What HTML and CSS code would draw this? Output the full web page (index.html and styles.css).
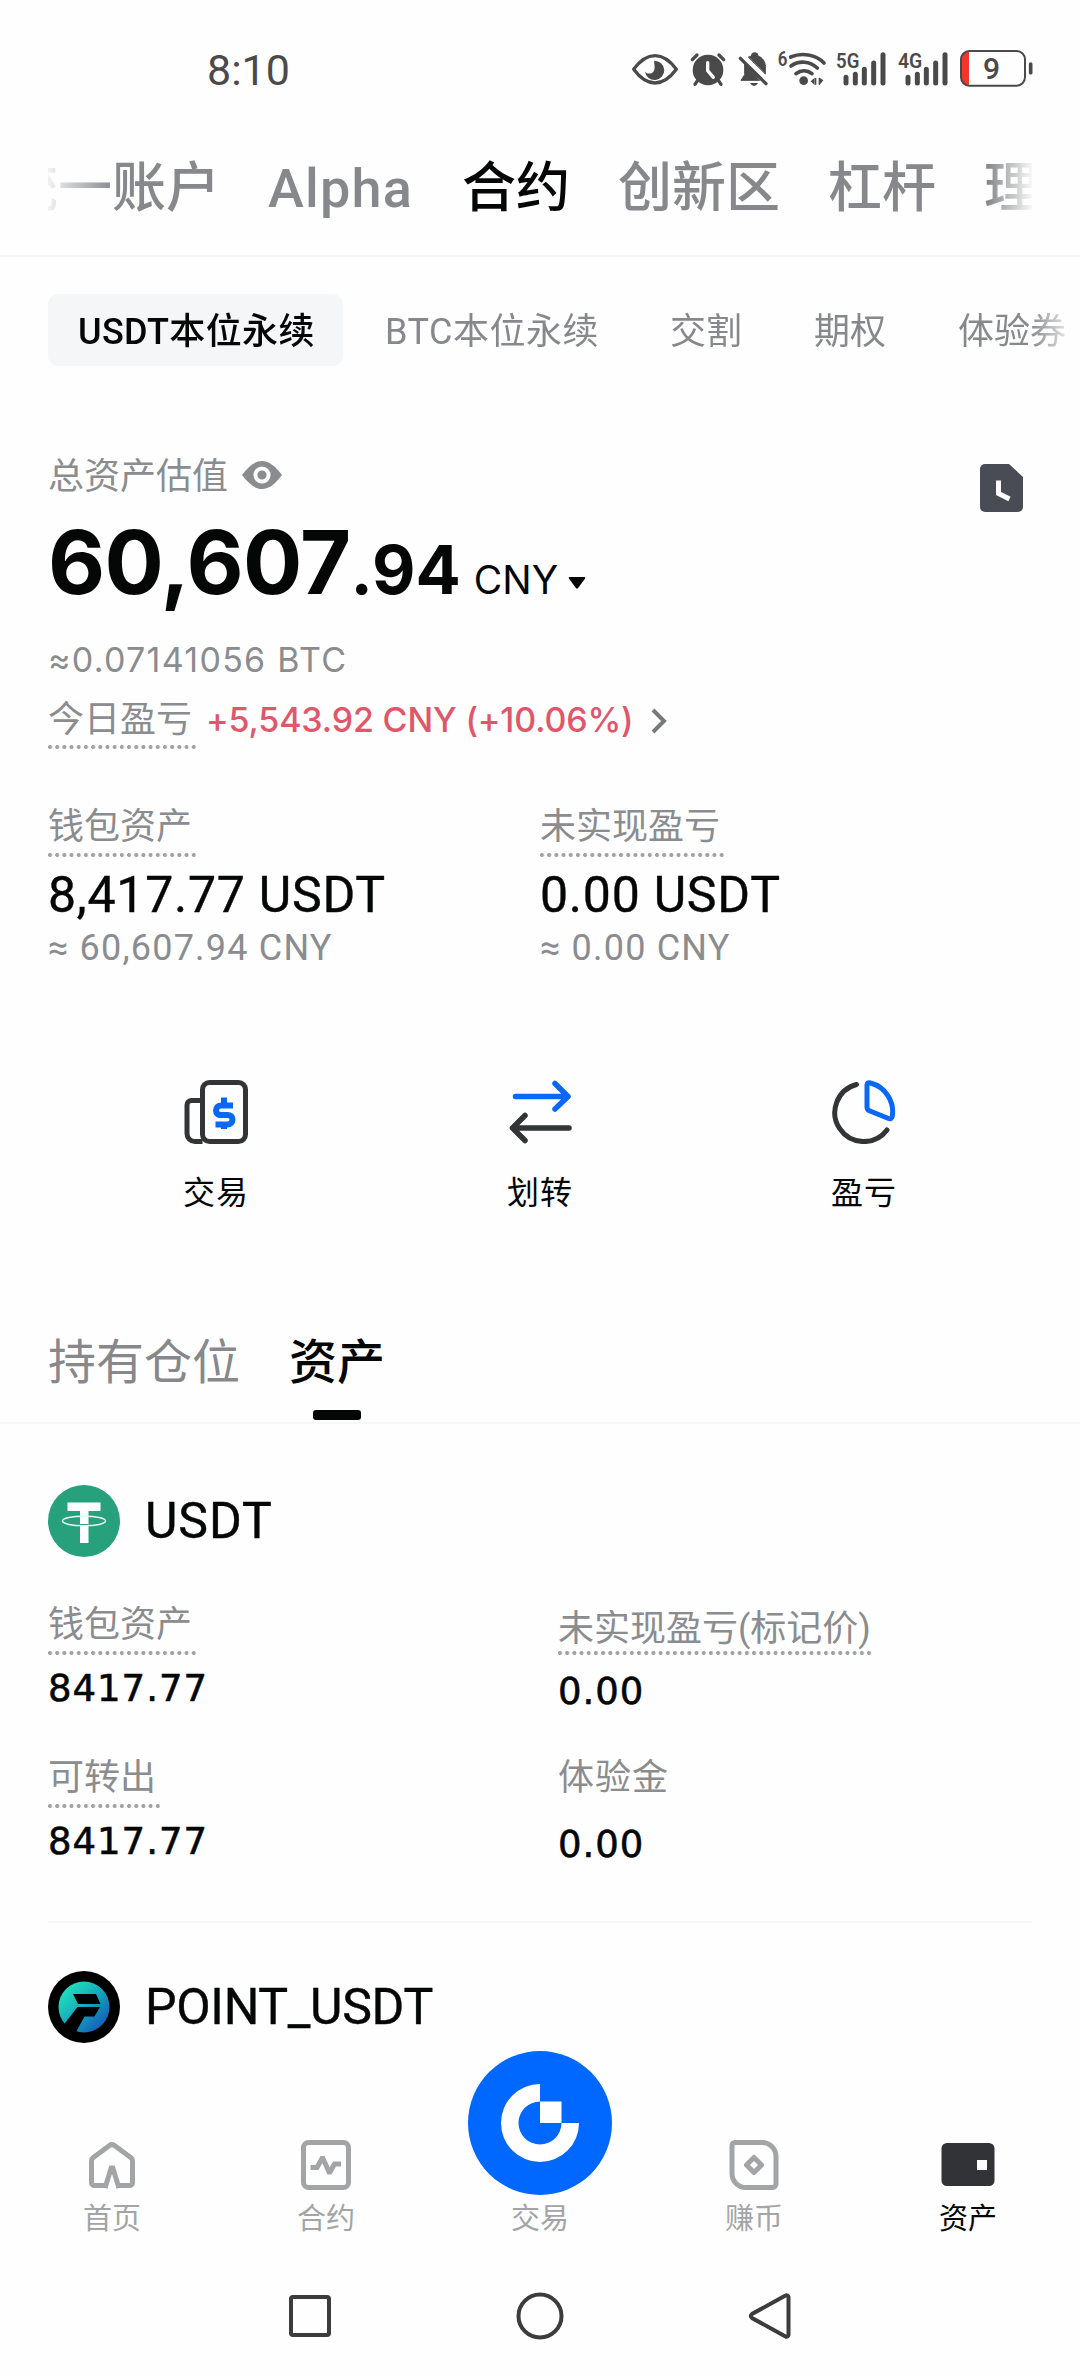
FILE: index.html
```html
<!DOCTYPE html>
<html lang="zh-CN">
<head>
<meta charset="utf-8">
<title>资产</title>
<link rel="stylesheet" href="styles.css">
</head>
<body>
<div class="screen">
  <header class="status">
    <span class="clock">8:10</span>
    <svg class="status-icons" viewBox="0 0 1260 180" fill="none" stroke="#4a4a4a" stroke-linecap="round">
      <path d="M41 88C60 62 82 47 105 47s45 15 64 41c-19 26-41 41-64 41S60 114 41 88Z" stroke-width="10" stroke-linejoin="round"/>
      <path d="M103 62a29 29 0 1 1-28 33c8 9 22 7 27-3 5-11-1-19 1-30Z" fill="#4a4a4a" stroke="none"/>
      <circle cx="264" cy="90" r="46" fill="#4a4a4a" stroke="none"/>
      <path d="M217 59l14-14M311 59l-14-14M233 121l-8 12M295 121l8 12" stroke-width="10"/>
      <path d="M263 68v24l17 20" stroke="#fefefe" stroke-width="10"/>
      <path d="M374 70v34l-11 17h55zM386 51l8-3a10 10 0 0 1 20 0c14 5 22 17 22 31v22z" fill="#4a4a4a" stroke="#4a4a4a" stroke-width="3" stroke-linejoin="round"/>
      <path d="M361 55l77 76" stroke-width="10"/>
      <path d="M390 129h24q-4 9-12 9t-12-9z" fill="#4a4a4a" stroke="none"/>
      <text x="473" y="79" class="tiny" textLength="29" lengthAdjust="spacingAndGlyphs">6</text>
      <path d="M512 51c33-14 75-8 100 18M513 78c24-17 56-15 79 6M528 101c15-12 34-11 48 0" stroke-width="11"/>
      <circle cx="551" cy="122" r="13" fill="#4a4a4a" stroke="none"/>
      <path d="M584 113v22l-12-11zM599 113l11 8-11 13z" fill="#4a4a4a" stroke="none"/>
      <path d="M587 115v18M598 115v18" stroke-width="4"/>
      <text x="648" y="83" class="tiny" textLength="70" lengthAdjust="spacingAndGlyphs">5G</text>
      <path d="M678 112v17M706 103v26M733 88v41M761 69v60M789 44v85" stroke-width="15"/>
      <text x="834" y="83" class="tiny" textLength="73" lengthAdjust="spacingAndGlyphs">4G</text>
      <path d="M864 112v17M892 103v26M919 88v41M947 69v60M975 44v85" stroke-width="15"/>
      <path d="M1047 36v98c-16 0-23-8-23-22V58c0-14 7-22 23-22z" fill="#f5352b" stroke="none"/>
      <rect x="1023" y="33" width="192" height="104" rx="25" stroke-width="6"/>
      <path d="M1232 72v26" stroke-width="11"/>
      <text x="1089" y="118" class="level">9</text>
    </svg>
  </header>

  <nav class="accounts">
    <div class="accounts-view">
      <span>统一账户</span>
      <span class="alpha">Alpha</span>
      <span class="on">合约</span>
      <span>创新区</span>
      <span>杠杆</span>
      <span>理财</span>
    </div>
  </nav>

  <nav class="chips">
    <span class="chip chip-on">USDT本位永续</span>
    <span class="chip chip-btc">BTC本位永续</span>
    <span class="chip">交割</span>
    <span class="chip">期权</span>
    <span class="chip">体验券</span>
  </nav>

  <section class="summary">
    <div class="summary-head">
      <div class="summary-title">
        <span>总资产估值</span>
        <svg width="42" height="30" viewBox="0 0 42 30"><path d="M1 15C8 6 14 1 21 1s13 5 20 14C34 24 28 29 21 29S8 24 1 15Z" fill="#8a8c8f"/><circle cx="21" cy="15" r="6.6" fill="none" stroke="#fefefe" stroke-width="4"/></svg>
      </div>
      <svg class="history" width="43" height="48" viewBox="0 0 43 48"><path d="M5 0h24l14 13v30a5 5 0 0 1-5 5H5a5 5 0 0 1-5-5V5a5 5 0 0 1 5-5Z" fill="#494c54"/><path d="M18.500 16.500v13l11 5.500" fill="none" stroke="#fefefe" stroke-width="5"/></svg>
    </div>
    <div class="total"><span class="whole">60,607</span><span class="cents">.94</span><span class="unit">CNY</span><svg class="caret" width="18" height="12" viewBox="0 0 18 12"><path d="M1.500 0h15q1.500 0 .6 1.500l-7 9.500q-1.100 1-2.200 0l-7-9.500Q0 0 1.500 0Z" fill="#050606"/></svg></div>
    <div class="btc">≈0.07141056 BTC</div>
    <div class="pnl">
      <span class="dots">今日盈亏</span>
      <span class="gain">+5,543.92 CNY (+10.06%)</span>
      <svg width="16" height="26" viewBox="0 0 16 26"><path d="M2 2l11 11L2 24" fill="none" stroke="#77797c" stroke-width="4"/></svg>
    </div>
    <div class="wallets">
      <div>
        <span class="dots">钱包资产</span>
        <div class="amount">8,417.77 USDT</div>
        <div class="approx">≈ 60,607.94 CNY</div>
      </div>
      <div>
        <span class="dots">未实现盈亏</span>
        <div class="amount">0.00 USDT</div>
        <div class="approx">≈ 0.00 CNY</div>
      </div>
    </div>
  </section>

  <section class="actions">
    <div class="action">
      <svg width="64" height="64" viewBox="0 0 64 64" fill="none" stroke="#323436" stroke-width="5"><path d="M18.500 61.500H11a8 8 0 0 1-8-8V25a4.500 4.500 0 0 1 4.500-4.500h11"/><rect x="18.500" y="2.500" width="43" height="59" rx="7"/><path d="M49 25.500H37a5 5 0 0 0-5 5c0 3 2 4.500 5 4.500h6.500c3 0 5 1.500 5 4.500a5 5 0 0 1-5 5H31.500M40 17.500v8M40 43v6" stroke="#0a68f5" stroke-width="6"/></svg>
      <span>交易</span>
    </div>
    <div class="action">
      <svg width="64" height="64" viewBox="0 0 64 64" fill="none" stroke-width="5.500" stroke-linecap="round" stroke-linejoin="round"><path d="M7.500 16.500H60M47 3.500l13 13-13 12.500" stroke="#0a68f5"/><path d="M61 48H4.500M17 35.500L4.500 48 17 60.500" stroke="#323436"/></svg>
      <span>划转</span>
    </div>
    <div class="action">
      <svg width="64" height="64" viewBox="0 0 64 64" fill="none" stroke-width="5" stroke-linecap="round" stroke-linejoin="round"><path d="M24.500 4.500A29 29 0 1 0 55 50" stroke="#323436"/><path d="M35 5v22q0 3 3 4l18.500 7.500q3 1 3.700-2A29.500 29.500 0 0 0 38.500 3Q35 2 35 5Z" stroke="#0a68f5"/></svg>
      <span>盈亏</span>
    </div>
  </section>

  <nav class="tabs">
    <span class="tab">持有仓位</span>
    <span class="tab tab-on">资产</span>
  </nav>

  <section class="coin">
    <div class="coin-head">
      <svg width="72" height="72" viewBox="0 0 72 72"><circle cx="36" cy="36" r="36" fill="#26a17b"/><path d="M19.500 17.500h33V26H40.500v32h-8.500V26H19.500z" fill="#fff"/><path d="M32 40h8.500" stroke="#26a17b" stroke-width="2"/><ellipse cx="36" cy="36" rx="21.500" ry="4.800" fill="none" stroke="#e9f6f1" stroke-width="1.500"/></svg>
      <span class="coin-name">USDT</span>
    </div>
    <div class="figures">
      <div class="figure"><span class="dots">钱包资产</span><div class="value">8417.77</div></div>
      <div class="figure figure-low"><span class="dots">未实现盈亏(标记价)</span><div class="value">0.00</div></div>
      <div class="figure"><span class="dots">可转出</span><div class="value">8417.77</div></div>
      <div class="figure figure-bonus"><span class="plain">体验金</span><div class="value">0.00</div></div>
    </div>
  </section>

  <section class="coin-head coin-next">
    <svg width="72" height="72" viewBox="0 0 72 72"><defs><linearGradient id="pt" x1="0" y1="0" x2="1" y2="1"><stop offset=".1" stop-color="#21e5bc"/><stop offset=".5" stop-color="#14a9bd"/><stop offset=".9" stop-color="#1558b8"/></linearGradient></defs><circle cx="36" cy="36" r="36"/><circle cx="36" cy="36" r="25.500" fill="url(#pt)"/><path d="M25 23h23l4.500 10H30zM29.500 36H52l-5.500 9.500H36.500L28 61H14L17 52z"/></svg>
    <span class="coin-name point-name">POINT_USDT</span>
  </section>

  <nav class="bottom">
    <div class="item">
      <svg width="50" height="50" viewBox="0 0 50 50" fill="none" stroke="#a2a4a6" stroke-width="5"><path d="M17.500 45.500H7.500a3 3 0 0 1-3-3V21q0-2 1.500-3.200L22.500 5.500q2.500-1.800 5 0L44 17.800q1.500 1.200 1.500 3.200v21.500a3 3 0 0 1-3 3H32.500"/><path d="M18 48l6.200-20h1.600L32 48"/></svg>
      <span>首页</span>
    </div>
    <div class="item">
      <svg width="50" height="50" viewBox="0 0 50 50" fill="none" stroke="#a2a4a6" stroke-width="5"><rect x="2.500" y="2.500" width="45" height="45" rx="5"/><path d="M9.500 27.500H16L21 18.500h1L28 32h1l4.500-8h6.500"/></svg>
      <span>合约</span>
    </div>
    <div class="item item-trade">
      <svg width="144" height="144" viewBox="0 0 144 144"><circle cx="72" cy="72" r="72" fill="#0068ff"/><path d="M72 33a39 39 0 1 0 39 39H93.500A21.500 21.500 0 1 1 72 50.500zM72 50.500h21.500V72H72z" fill="#fff"/></svg>
      <span>交易</span>
    </div>
    <div class="item">
      <svg width="50" height="50" viewBox="0 0 50 50" fill="none" stroke="#a2a4a6" stroke-width="5"><path d="M6 2.500H33a14 14 0 0 1 14 14V44a3.500 3.500 0 0 1-3.500 3.500H17a14 14 0 0 1-14-14V6a3.500 3.500 0 0 1 3-3.500Z"/><path d="M25 17.500l7.500 7.500-7.500 7.500-7.500-7.500z" stroke-linejoin="round"/></svg>
      <span>赚币</span>
    </div>
    <div class="item item-on">
      <svg width="54" height="50" viewBox="0 0 54 50"><path d="M6 3h42a5.500 5.500 0 0 1 5.500 5.500v32A5.500 5.500 0 0 1 48 46H6a5.500 5.500 0 0 1-5.500-5.500v-32A5.500 5.500 0 0 1 6 3ZM36 20v10h10V20z" fill="#313337" fill-rule="evenodd"/></svg>
      <span>资产</span>
    </div>
  </nav>

  <div class="system">
    <svg width="48" height="48" viewBox="0 0 48 48"><rect x="5" y="5" width="38" height="38" rx="2"/></svg>
    <svg width="48" height="48" viewBox="0 0 48 48"><circle cx="24" cy="24" r="21.500"/></svg>
    <svg width="48" height="48" viewBox="0 0 48 48"><path d="M39.500 3.500a2 2 0 0 1 3 1.500v38a2 2 0 0 1-3 1.500L6 26q-2.500-2 0-4z"/></svg>
  </div>
</div>
</body>
</html>
```
FILE: styles.css
```css
* { box-sizing: border-box; }
body {
  margin: 0;
  background: #fefefe;
  color: #050606;
  font-family: Roboto, "Noto Sans CJK SC", sans-serif;
}
.screen {
  width: 1080px;
  height: 2376px;
  overflow: hidden;
  display: flex;
  flex-direction: column;
  white-space: nowrap;
}
.screen > * { flex-shrink: 0; }
svg { display: block; flex-shrink: 0; }

.status {
  height: 140px;
  padding: 0 40px 0 207px;
  display: flex;
  justify-content: space-between;
  align-items: center;
}
.clock { font-size: 43px; line-height: 50px; color: #4a4a4a; }
.status-icons { width: 420px; height: 60px; }
.tiny { font: 600 62px Roboto, sans-serif; fill: #4a4a4a; stroke: none; }
.level { font: 500 90px Roboto, sans-serif; fill: #4a4a4a; stroke: none; }

.accounts { height: 117px; padding: 0 48px; border-bottom: 2px solid #f3f4f5; }
.accounts-view {
  height: 98px;
  overflow: hidden;
  display: flex;
  gap: 48px;
  align-items: center;
  font-size: 54px;
  font-weight: 500;
  color: #86888b;
  -webkit-mask-image: linear-gradient(90deg, rgba(0,0,0,.1), #000 66px, #000 940px, rgba(0,0,0,.05));
  mask-image: linear-gradient(90deg, rgba(0,0,0,.1), #000 66px, #000 940px, rgba(0,0,0,.05));
}
.accounts-view span { flex-shrink: 0; line-height: 80px; }
.accounts-view span:first-child { margin-left: -44px; }
.accounts-view .alpha { width: 146px; letter-spacing: 1.2px; }
.accounts-view .on { color: #050606; }

.chips {
  height: 109px;
  padding: 37px 16px 0 48px;
  display: flex;
  gap: 12px;
  overflow: hidden;
  -webkit-mask-image: linear-gradient(90deg, #000 1030px, transparent 1078px);
  mask-image: linear-gradient(90deg, #000 1030px, transparent 1078px);
}
.chip {
  flex-shrink: 0;
  height: 72px;
  padding: 0 30px;
  border-radius: 10px;
  font-size: 36px;
  line-height: 77px;
  color: #86888b;
}
.chip-on { width: 295px; background: #f4f6f8; color: #050606; font-weight: 500; letter-spacing: .35px; }
.chip-btc { width: 273px; letter-spacing: .5px; }

.summary { padding: 89px 48px 0; }
.summary-head { height: 60px; display: flex; justify-content: space-between; }
.summary-title {
  height: 40px;
  display: flex;
  align-items: center;
  gap: 13px;
  font-size: 36px;
  line-height: 40px;
  color: #8a8c8f;
}
.summary-title span { padding-top: 3px; }
.history { margin: 9px 9px 0 0; }
.total { height: 95px; line-height: 95px; font-family: Inter, sans-serif; font-weight: 700; }
.total span { line-height: 1; }
.total .whole { font-size: 88px; line-height: 95px; letter-spacing: -.7px; }
.cents { font-size: 67px; }
.unit { margin-left: 13px; font-size: 39px; font-weight: 400; }
.caret { display: inline-block; margin-left: 10px; vertical-align: 5px; }
.btc {
  margin-top: 30px;
  font: 400 34px/40px Inter, sans-serif;
  letter-spacing: 1.3px;
  color: #8a8c8f;
}
.pnl { height: 50px; margin-top: 19px; display: flex; align-items: flex-start; }
.pnl svg { margin: 9px 0 0 17px; }
.gain {
  margin-left: 10px;
  font: 500 34px/42px Inter, sans-serif;
  letter-spacing: -.15px;
  color: #e0566a;
}
.dots {
  display: inline-block;
  vertical-align: top;
  padding: 0 4px 7px 0;
  font-size: 36px;
  line-height: 43px;
  color: #8a8c8f;
  background: radial-gradient(circle at 2px 2px, #a0a2a4 1.7px, transparent 2.3px) 0 100% / 7.2px 4px repeat-x;
}
.wallets { margin-top: 57px; display: grid; grid-template-columns: 492px 492px; }
.wallets .dots { padding-bottom: 8px; }
.amount { margin-top: 14px; font-size: 50px; line-height: 48px; letter-spacing: .75px; -webkit-text-stroke: .4px; }
.approx { margin-top: 8px; font-size: 36px; line-height: 42px; height: 40px; letter-spacing: 1.2px; color: #8a8c8f; }

.actions {
  margin-top: 113px;
  padding: 0 54px;
  display: grid;
  grid-template-columns: repeat(3, 1fr);
}
.action { display: flex; flex-direction: column; align-items: center; gap: 29px; font-size: 32px; line-height: 40px; letter-spacing: 1px; }

.tabs {
  margin-top: 118px;
  height: 93px;
  padding: 0 48px;
  display: flex;
  gap: 49px;
  font-size: 48px;
  line-height: 63px;
  color: #86888b;
  border-bottom: 2px solid #f5f6f7;
}
.tab-on { color: #050606; font-weight: 500; }
.tab-on::after {
  content: "";
  display: block;
  width: 48px;
  height: 10px;
  margin: 16px auto 0;
  border-radius: 3px;
  background: #050606;
}

.coin { margin: 61px 48px 0; border-bottom: 2px solid #f5f6f7; }
.coin-head { display: flex; align-items: center; gap: 25px; }
.coin-name { font-size: 50px; line-height: 60px; letter-spacing: .9px; -webkit-text-stroke: .4px; }
.point-name { letter-spacing: -.3px; }
.coin-next { margin: 48px 48px 0; }
.figures {
  margin: 47px 0 61px;
  display: grid;
  grid-template-columns: 510px 474px;
  row-gap: 50px;
}
.figure { height: 103px; }
.figure .dots { padding-bottom: 8px; }
.value {
  margin-top: 14px;
  font: 400 37px/40px "DejaVu Sans", sans-serif;
  letter-spacing: 1px;
  -webkit-text-stroke: .6px;
}
.figure-low { padding-top: 4px; }
.figure-low .dots { padding: 0 3px 4px 0; }
.figure-low .value, .figure-bonus .value { margin-top: 17px; }
.plain { display: block; height: 51px; font-size: 36px; line-height: 43px; letter-spacing: 1px; color: #8a8c8f; }

.bottom {
  margin-top: 8px;
  height: 188px;
  padding: 0 5px 0 5px;
  display: grid;
  grid-template-columns: repeat(5, 1fr);
  align-items: end;
}
.item {
  display: flex;
  flex-direction: column;
  align-items: center;
  gap: 8px;
  font-size: 29px;
  line-height: 43px;
  color: #a2a4a6;
}
.item span { height: 41px; }
.item-trade { gap: 3px; }
.item-on { color: #050606; }

.system { padding-top: 53px; display: flex; justify-content: center; gap: 182px; }
.system svg { fill: none; stroke: #3c3c3c; stroke-width: 4; }
```
